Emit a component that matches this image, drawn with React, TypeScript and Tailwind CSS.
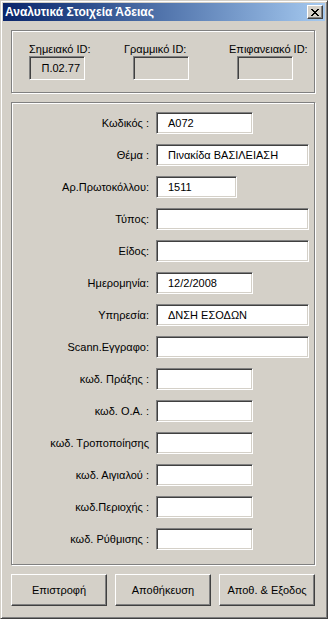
import React from "react";

const font = { fontFamily: '"Liberation Sans", Arial, sans-serif' };

function Field({ w, value }: { w: number; value?: string }) {
  return (
    <div
      className="h-[22px] bg-white border border-t-[#808080] border-l-[#808080] border-r-white border-b-white shadow-[inset_1px_1px_0_#404040,inset_-1px_-1px_0_#d4d0c8] flex items-center pl-[11px] text-[11px] text-black whitespace-nowrap overflow-hidden"
      style={{ width: w }}
    >
      {value}
    </div>
  );
}

function Row({ label, w, value }: { label: string; w: number; value?: string }) {
  return (
    <div className="flex items-center h-[22px]">
      <div className="w-[137px] text-right text-[11px] text-black whitespace-nowrap">{label}</div>
      <div className="ml-[7px]">
        <Field w={w} value={value} />
      </div>
    </div>
  );
}

function IdCol({ label, shift, value }: { label: string; shift: number; value?: string }) {
  return (
    <div className="w-[56px] flex flex-col items-start">
      <div className="text-[11px] text-black whitespace-nowrap h-[14px] leading-[14px] mt-[1px]" style={{ marginLeft: shift }}>
        {label}
      </div>
      <div className="w-[56px] h-[24px] bg-[#d4d0c8] border border-t-[#808080] border-l-[#808080] border-r-white border-b-white shadow-[inset_1px_1px_0_#404040,inset_-1px_-1px_0_#d4d0c8] flex items-center justify-end pr-[4px] text-[11px] text-black">
        {value}
      </div>
    </div>
  );
}

function Btn({ children }: { children: React.ReactNode }) {
  return (
    <div className="w-[96px] h-[32px] bg-[#d4d0c8] border border-t-white border-l-white border-r-[#404040] border-b-[#404040] shadow-[inset_-1px_-1px_0_#808080] flex items-center justify-center text-[11px] text-black">
      {children}
    </div>
  );
}

export default function App() {
  const rows: { label: string; w: number; value?: string }[] = [
    { label: "Κωδικός :", w: 97, value: "A072" },
    { label: "Θέμα :", w: 153, value: "Πινακίδα ΒΑΣΙΛΕΙΑΣΗ" },
    { label: "Αρ.Πρωτοκόλλου:", w: 81, value: "1511" },
    { label: "Τύπος:", w: 153 },
    { label: "Είδος:", w: 153 },
    { label: "Ημερομηνία:", w: 97, value: "12/2/2008" },
    { label: "Υπηρεσία:", w: 153, value: "ΔΝΣΗ ΕΣΟΔΩΝ" },
    { label: "Scann.Εγγραφο:", w: 153 },
    { label: "κωδ. Πράξης :", w: 97 },
    { label: "κωδ. Ο.Α. :", w: 97 },
    { label: "κωδ. Τροποποίησης", w: 97 },
    { label: "κωδ. Αιγιαλού :", w: 97 },
    { label: "κωδ.Περιοχής :", w: 97 },
    { label: "κωδ. Ρύθμισης :", w: 97 },
  ];
  return (
    <div
      className="w-[328px] h-[619px] bg-[#d4d0c8] border border-t-[#d4d0c8] border-l-[#d4d0c8] border-r-[#404040] border-b-[#404040] shadow-[inset_1px_1px_0_#fff,inset_-1px_-1px_0_#808080] p-[2px] flex flex-col"
      style={font}
    >
      {/* Title bar */}
      <div className="h-[18px] flex items-center justify-between bg-gradient-to-r from-[#0a246a] to-[#a6caf0] pl-[2px] pr-[2px]">
        <span className="text-white font-bold text-[12px] whitespace-nowrap">Αναλυτικά Στοιχεία Άδειας</span>
        <div className="w-[16px] h-[14px] bg-[#d4d0c8] border border-t-white border-l-white border-r-[#404040] border-b-[#404040] shadow-[inset_-1px_-1px_0_#808080] flex items-center justify-center">
          <svg width="8" height="7" viewBox="0 0 8 7" shapeRendering="crispEdges">
            <path
              fill="#000"
              d="M0 0h2v1h-2z M6 0h2v1h-2z M1 1h2v1h-2z M5 1h2v1h-2z M2 2h4v1h-4z M3 3h2v1h-2z M2 4h4v1h-4z M1 5h2v1h-2z M5 5h2v1h-2z M0 6h2v1h-2z M6 6h2v1h-2z"
            />
          </svg>
        </div>
      </div>

      <div className="flex flex-col pl-[8px] pt-[9px]">
        {/* Group 1 */}
        <div className="w-[304px] h-[63px] border border-[#808080] shadow-[1px_1px_0_#fff,inset_1px_1px_0_#fff] flex pl-[17px] pt-[10px] gap-[48px]">
          <IdCol label="Σημειακό ID:" shift={0} value="Π.02.77" />
          <IdCol label="Γραμμικό ID:" shift={-9} />
          <IdCol label="Επιφανειακό ID:" shift={-8} />
        </div>

        {/* Group 2 */}
        <div className="mt-[9px] w-[304px] h-[463px] border border-[#808080] shadow-[1px_1px_0_#fff,inset_1px_1px_0_#fff] flex flex-col pt-[9px] gap-[10px]">
          {rows.map((r) => (
            <Row key={r.label} label={r.label} w={r.w} value={r.value} />
          ))}
        </div>

        {/* Buttons */}
        <div className="mt-[9px] w-[304px] flex gap-[8px]">
          <Btn>Επιστροφή</Btn>
          <Btn>Αποθήκευση</Btn>
          <Btn>Αποθ. &amp; Εξοδος</Btn>
        </div>
      </div>
    </div>
  );
}
